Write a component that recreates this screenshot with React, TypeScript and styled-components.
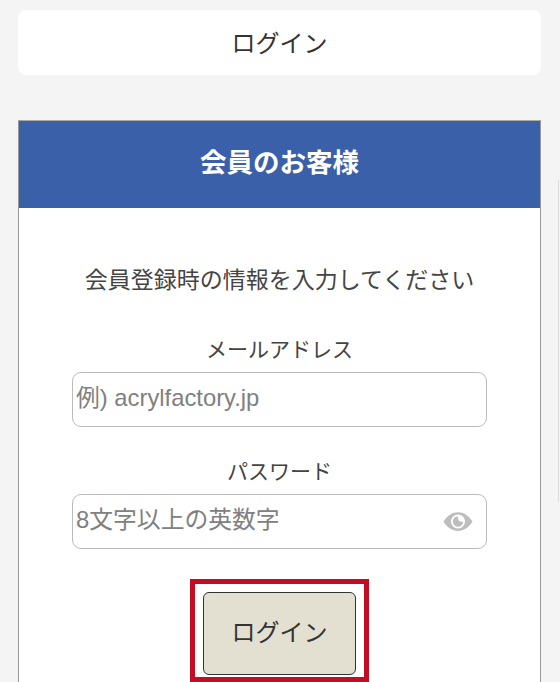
import React from "react";
import styled, { createGlobalStyle } from "styled-components";

const GlobalStyle = createGlobalStyle`
  html, body {
    margin: 0;
    padding: 0;
    height: 682px;
    overflow: hidden;
    background: #f4f4f4;
    font-family: "Liberation Sans", "Noto Sans CJK JP", sans-serif;
    color: #333;
  }
  * { box-sizing: border-box; }
`;

const Page = styled.div`
  position: relative;
  width: 560px;
  height: 682px;
  padding: 10px 19px 0 18px;
  overflow: hidden;
`;

// faint edge of the neighbouring panel, lies over the page background
const EdgeLine = styled.div`
  position: absolute;
  top: 180px;
  right: 1px;
  width: 1px;
  height: 322px;
  background: #dcdcdc;
`;

const PageTitle = styled.h1`
  margin: 0 0 45px;
  height: 65px;
  padding-bottom: 3px;
  display: flex;
  align-items: center;
  justify-content: center;
  background: #fff;
  border-radius: 8px;
  font-size: 24px;
  font-weight: 400;
`;

const Card = styled.section`
  background: #fff;
  border: 1px solid #999;
  border-top-color: #aaa;
  border-bottom: 0;
`;

const CardHeader = styled.h2`
  margin: 0;
  height: 87px;
  padding-bottom: 8px;
  display: flex;
  align-items: center;
  justify-content: center;
  background: #3a60aa;
  color: #fff;
  font-size: 26.5px;
  font-weight: 700;
`;

const Form = styled.form`
  display: flex;
  flex-direction: column;
  align-items: center;
  padding: 56px 53px 0;
`;

const Lead = styled.p`
  margin: 0 0 39px;
  font-size: 23px;
  line-height: 32px;
  color: #444;
`;

const Field = styled.label`
  width: 100%;
  display: flex;
  flex-direction: column;
  align-items: center;
  margin-bottom: 30px;
`;

const FieldLabel = styled.span`
  font-size: 21px;
  line-height: 30px;
  margin-bottom: 7px;
  color: #444;
`;

const InputWrap = styled.div`
  position: relative;
  width: 100%;
`;

const Input = styled.input`
  display: block;
  width: 100%;
  height: 55px;
  padding: 0 3px 4px;
  background: #fff;
  border: 1.5px solid #bbb;
  border-radius: 9px;
  outline: none;
  font: inherit;
  font-size: 23.8px;
  &::placeholder {
    color: #808080;
    opacity: 1;
  }
`;

const EyeButton = styled.span`
  position: absolute;
  right: 14px;
  top: 17px;
  display: flex;
`;

const Highlight = styled.div`
  width: 179px;
  height: 103px;
  display: flex;
  align-items: flex-start;
  justify-content: center;
  border: 5px solid #c30d23;
  padding: 8px 0 0;
`;

const LoginButton = styled.button`
  width: 153px;
  height: 83px;
  padding: 0 0 6px;
  background: #e3e0d1;
  border: 1px solid #333;
  border-radius: 6px;
  color: #333;
  font: inherit;
  font-size: 24px;
`;

const EyeIcon = () => (
  <svg width="30" height="21" viewBox="0 0 32 22" aria-hidden="true">
    <path
      fillRule="evenodd"
      fill="#bdbdbd"
      d="M0.5 11C4.5 4.500 10 1 16 1s11.500 3.500 15.500 10C27.500 17.500 22 21 16 21S4.500 17.500 0.500 11ZM16 3.500a7.500 7.500 0 1 0 0 15a7.500 7.500 0 0 0 0-15Z"
    />
    <path
      fill="#bdbdbd"
      d="M16 5.500a5.500 5.500 0 1 0 5.500 5.500a5.500 5.500 0 0 1-1.500.2A4.300 4.300 0 0 1 15.800 6.700A5 5 0 0 1 16 5.500Z"
    />
  </svg>
);

export default function App() {
  return (
    <Page>
      <GlobalStyle />
      <PageTitle>ログイン</PageTitle>
      <Card>
        <CardHeader>会員のお客様</CardHeader>
        <Form onSubmit={(e) => e.preventDefault()}>
          <Lead>会員登録時の情報を入力してください</Lead>
          <Field>
            <FieldLabel>メールアドレス</FieldLabel>
            <InputWrap>
              <Input type="email" placeholder="例) acrylfactory.jp" />
            </InputWrap>
          </Field>
          <Field>
            <FieldLabel>パスワード</FieldLabel>
            <InputWrap>
              <Input type="password" placeholder="8文字以上の英数字" />
              <EyeButton>
                <EyeIcon />
              </EyeButton>
            </InputWrap>
          </Field>
          <Highlight>
            <LoginButton type="submit">ログイン</LoginButton>
          </Highlight>
        </Form>
      </Card>
      <EdgeLine />
    </Page>
  );
}
